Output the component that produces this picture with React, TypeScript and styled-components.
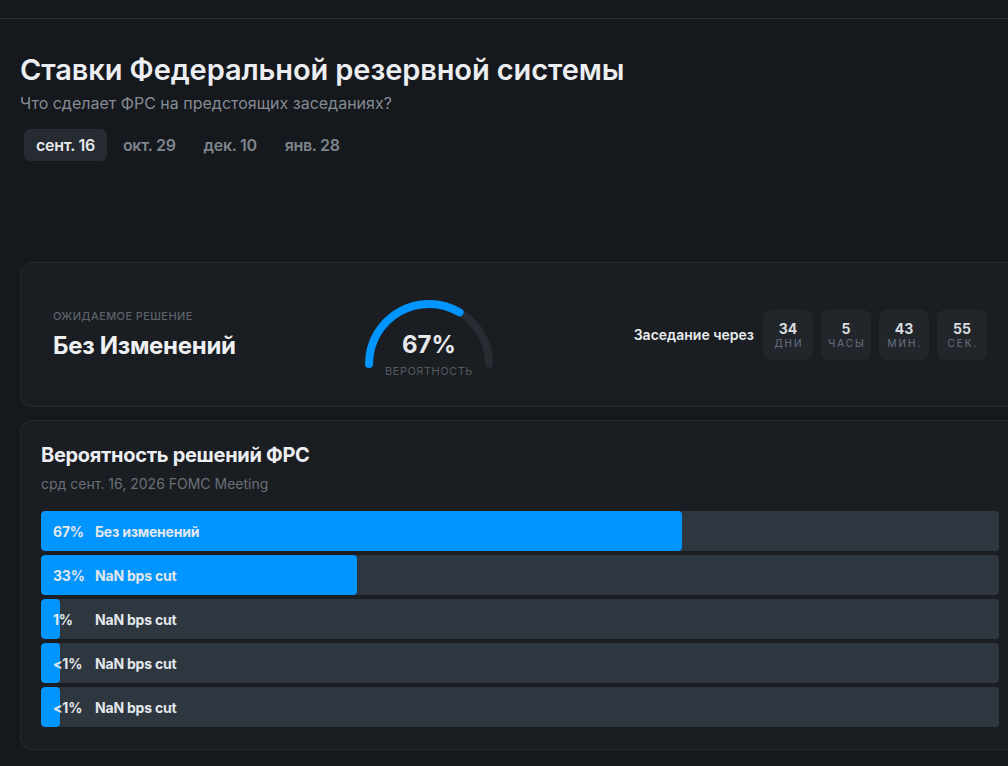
import { useState } from 'react';
import styled, { createGlobalStyle } from 'styled-components';

const GlobalStyle = createGlobalStyle`
  html, body {
    margin: 0;
    padding: 0;
    background: #15181c;
    overflow: hidden;
  }
  body {
    font-family: Inter, "Noto Sans", "Liberation Sans", sans-serif;
    color: #e8ebee;
  }
`;

const TopBar = styled.div`
  height: 18px;
  border-bottom: 1px solid #2a2e34;
`;

const Page = styled.main`
  width: 1000px;
  padding: 33px 0 0 20px;
`;

const Title = styled.h1`
  margin: 0;
  font-size: 29px;
  line-height: 36px;
  font-weight: 600;
  letter-spacing: -0.1px;
  color: #eceef1;
`;

const Subtitle = styled.p`
  margin: 5px 0 0;
  font-size: 16px;
  line-height: 20px;
  color: #858b94;
`;

const Tabs = styled.div`
  display: flex;
  gap: 4px;
  margin: 16px 0 0 4px;
`;

const Tab = styled.button<{ $active?: boolean }>`
  height: 32px;
  padding: 0 12px;
  border: none;
  border-radius: 6px;
  font-family: inherit;
  font-size: 16px;
  font-weight: 600;
  letter-spacing: -0.3px;
  cursor: pointer;
  background: ${(p) => (p.$active ? '#262b31' : 'transparent')};
  color: ${(p) => (p.$active ? '#e6e9ec' : '#7d848d')};
`;

const Card = styled.section`
  box-sizing: border-box;
  border: 1px solid #262a30;
  border-radius: 12px;
  background: #1a1d21;
`;

const DecisionCard = styled(Card)`
  margin-top: 101px;
  height: 145px;
  padding: 0 32px;
  display: flex;
  align-items: center;
`;

const Expected = styled.div`
  width: 308px;
  display: flex;
  flex-direction: column;
  gap: 6px;
`;

const Caption = styled.span`
  font-size: 11px;
  line-height: 16px;
  font-weight: 500;
  letter-spacing: 0.4px;
  text-transform: uppercase;
  color: #5d636b;
`;

const Decision = styled.span`
  font-size: 24px;
  line-height: 32px;
  font-weight: 700;
  letter-spacing: -0.3px;
  color: #eef0f2;
`;

const GaugeBox = styled.div`
  position: relative;
  width: 136px;
  height: 82px;
  margin-top: 4px;
`;

const GaugeValue = styled.div`
  position: absolute;
  left: 0;
  right: 0;
  top: 35px;
  text-align: center;
  font-size: 24px;
  line-height: 28px;
  font-weight: 700;
  color: #e6e8eb;
`;

const GaugeLabel = styled.div`
  position: absolute;
  left: 0;
  right: 0;
  top: 68px;
  text-align: center;
  font-size: 11px;
  line-height: 14px;
  letter-spacing: 0.5px;
  color: #545a62;
`;

const Countdown = styled.div`
  margin-left: auto;
  display: flex;
  align-items: center;
  gap: 8px;
`;

const CountdownText = styled.span`
  margin-right: 1px;
  font-size: 14px;
  font-weight: 600;
  color: #e9ecef;
`;

const TimeBox = styled.div`
  width: 50px;
  height: 50px;
  border-radius: 8px;
  background: #22262b;
  display: flex;
  flex-direction: column;
  align-items: center;
  justify-content: center;
`;

const TimeNum = styled.span`
  font-size: 14px;
  line-height: 17px;
  font-weight: 700;
  color: #d9dde2;
`;

const TimeUnit = styled.span`
  font-size: 10px;
  line-height: 13px;
  letter-spacing: 2px;
  margin-right: -2px;
  color: #687384;
`;

const ChartCard = styled(Card)`
  margin-top: 13px;
  padding: 20px 20px 22px;
`;

const ChartTitle = styled.h2`
  margin: 0;
  font-size: 20px;
  line-height: 28px;
  font-weight: 700;
  letter-spacing: -0.3px;
  color: #eceef1;
`;

const ChartSub = styled.p`
  margin: 5px 0 0;
  font-size: 14px;
  line-height: 20px;
  color: #6a7078;
`;

const Bars = styled.div`
  margin-top: 17px;
  display: flex;
  flex-direction: column;
  gap: 4px;
`;

const Track = styled.div`
  position: relative;
  height: 40px;
  border-radius: 4px;
  background: #2e3740;
  overflow: hidden;
`;

const Fill = styled.div`
  position: absolute;
  left: 0;
  top: 0;
  bottom: 0;
  min-width: 19px;
  border-radius: 4px;
  background: #0095ff;
`;

const BarText = styled.div`
  position: relative;
  height: 100%;
  display: flex;
  align-items: center;
  padding-left: 12px;
  font-size: 14px;
  font-weight: 700;
  letter-spacing: -0.2px;
  color: #e3e7eb;
`;

const Pct = styled.span`
  width: 42px;
`;

interface IOutcome {
  pct: number;
  label: string;
  name: string;
}

const meetings = ['сент. 16', 'окт. 29', 'дек. 10', 'янв. 28'];

const outcomes: IOutcome[] = [
  { pct: 66.9, label: '67%', name: 'Без изменений' },
  { pct: 33, label: '33%', name: 'NaN bps cut' },
  { pct: 1, label: '1%', name: 'NaN bps cut' },
  { pct: 0.4, label: '<1%', name: 'NaN bps cut' },
  { pct: 0.2, label: '<1%', name: 'NaN bps cut' },
];

const countdown = [
  { value: 34, unit: 'ДНИ' },
  { value: 5, unit: 'ЧАСЫ' },
  { value: 43, unit: 'МИН.' },
  { value: 55, unit: 'СЕК.' },
];

/* half-circle gauge, value 0..1 */
const Gauge = ({ value }: { value: number }) => {
  const r = 60;
  const cx = 68;
  const cy = 68;
  const angle = Math.PI * (1 - value);
  const ex = cx + r * Math.cos(angle);
  const ey = cy - r * Math.sin(angle);
  return (
    <svg width="136" height="80" viewBox="0 0 136 80">
      <path
        d={`M ${cx - r} ${cy} A ${r} ${r} 0 0 1 ${cx + r} ${cy}`}
        fill="none"
        stroke="#272c33"
        strokeWidth="8"
        strokeLinecap="round"
      />
      <path
        d={`M ${cx - r} ${cy} A ${r} ${r} 0 0 1 ${ex} ${ey}`}
        fill="none"
        stroke="#0095ff"
        strokeWidth="8"
        strokeLinecap="round"
      />
    </svg>
  );
};

export default function App() {
  const [selected, setSelected] = useState(0);

  return (
    <>
      <GlobalStyle />
      <TopBar />
      <Page>
        <Title>Ставки Федеральной резервной системы</Title>
        <Subtitle>Что сделает ФРС на предстоящих заседаниях?</Subtitle>
        <Tabs>
          {meetings.map((m, i) => (
            <Tab key={m} $active={i === selected} onClick={() => setSelected(i)}>
              {m}
            </Tab>
          ))}
        </Tabs>

        <DecisionCard>
          <Expected>
            <Caption>Ожидаемое решение</Caption>
            <Decision>Без Изменений</Decision>
          </Expected>
          <GaugeBox>
            <Gauge value={0.67} />
            <GaugeValue>67%</GaugeValue>
            <GaugeLabel>ВЕРОЯТНОСТЬ</GaugeLabel>
          </GaugeBox>
          <Countdown>
            <CountdownText>Заседание через</CountdownText>
            {countdown.map((c) => (
              <TimeBox key={c.unit}>
                <TimeNum>{c.value}</TimeNum>
                <TimeUnit>{c.unit}</TimeUnit>
              </TimeBox>
            ))}
          </Countdown>
        </DecisionCard>

        <ChartCard>
          <ChartTitle>Вероятность решений ФРС</ChartTitle>
          <ChartSub>срд сент. 16, 2026 FOMC Meeting</ChartSub>
          <Bars>
            {outcomes.map((o, i) => (
              <Track key={i}>
                <Fill style={{ width: `${o.pct}%` }} />
                <BarText>
                  <Pct>{o.label}</Pct>
                  {o.name}
                </BarText>
              </Track>
            ))}
          </Bars>
        </ChartCard>
      </Page>
    </>
  );
}
